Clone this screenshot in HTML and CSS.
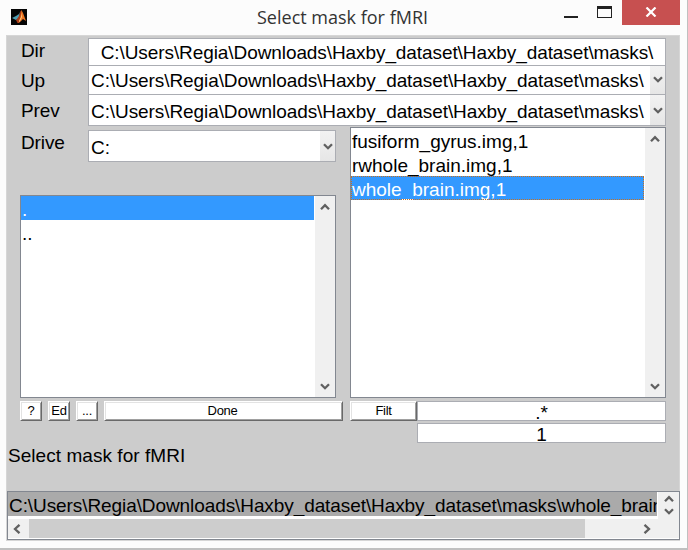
FILE: index.html
```
<!DOCTYPE html>
<html lang="en">
<head>
<meta charset="utf-8">
<title>Select mask for fMRI</title>
<link rel="stylesheet" href="styles.css">
</head>
<body>
<svg class="defs" aria-hidden="true">
  <symbol id="down" viewBox="0 0 10 8"><path d="M1 1.2L5 5.2L9 1.2" fill="none" stroke="#606060" stroke-width="2.3"/></symbol>
  <symbol id="up" viewBox="0 0 10 8"><path d="M1 6.2L5 2.2L9 6.2" fill="none" stroke="#606060" stroke-width="2.3"/></symbol>
</svg>
<div class="window">
  <header class="titlebar">
    <svg class="logo" viewBox="0 0 16 16">
      <rect width="16" height="16" fill="#050505"/>
      <path d="M1 9L5 7L8 5L9 3L8 9L5 11L3 10Z" fill="#4f9fb4"/>
      <path d="M6 10L8 7L9.5 2L11 1.5L10 8L8 14L6.5 14L5 11Z" fill="#a93b18"/>
      <path d="M10.500 1L12 4L15 12L12 10L9 13L7.500 14L9.500 8Z" fill="#ee7522"/>
      <path d="M8 12L10 8L11 4L11 8L8.500 13Z" fill="#ffd080"/>
    </svg>
    <h1 class="title">Select mask for fMRI</h1>
    <div class="controls">
      <span class="min"></span>
      <span class="max"></span>
      <span class="close"><svg viewBox="0 0 12 10" width="12" height="10"><path d="M1.500 .5L10.500 9.500M10.500 .5L1.500 9.500" stroke="#fff" stroke-width="2.200"/></svg></span>
    </div>
  </header>
  <main class="client">
    <div class="row row-dir"><label>Dir</label><div class="field center path">C:\Users\Regia\Downloads\Haxby_dataset\Haxby_dataset\masks\</div></div>
    <div class="row row-up"><label>Up</label><div class="field path">C:\Users\Regia\Downloads\Haxby_dataset\Haxby_dataset\masks\<span class="drop"><svg><use href="#down"/></svg></span></div></div>
    <div class="row row-prev"><label>Prev</label><div class="field path">C:\Users\Regia\Downloads\Haxby_dataset\Haxby_dataset\masks\<span class="drop"><svg><use href="#down"/></svg></span></div></div>
    <div class="browser">
      <div class="left">
        <div class="row row-drive"><label>Drive</label><div class="field">C:<span class="drop"><svg><use href="#down"/></svg></span></div></div>
        <div class="list dirs">
          <ul><li class="selected">.</li><li>..</li></ul>
          <div class="scroll"><svg><use href="#up"/></svg><svg><use href="#down"/></svg></div>
        </div>
      </div>
      <div class="list files">
        <ul><li>fusiform_gyrus.img,1</li><li>rwhole_brain.img,1</li><li class="selected focus">whole_brain.img,1</li></ul>
        <div class="scroll"><svg><use href="#up"/></svg><svg><use href="#down"/></svg></div>
      </div>
    </div>
    <div class="actions">
      <button class="help">?</button><button class="ed">Ed</button><button class="more">...</button><button class="done">Done</button><button class="filt">Filt</button>
      <div class="filters"><div class="edit star">.*</div><div class="edit">1</div></div>
    </div>
    <p class="prompt">Select mask for fMRI</p>
    <div class="chosen">
      <div class="chosen-top">
        <div class="chosen-item path">C:\Users\Regia\Downloads\Haxby_dataset\Haxby_dataset\masks\whole_brain</div>
        <div class="spin"><svg><use href="#up"/></svg><svg><use href="#down"/></svg></div>
      </div>
      <div class="hscroll">
        <svg class="prev" viewBox="0 0 8 10"><path d="M6.500 .8L2 5L6.500 9.200" fill="none" stroke="#606060" stroke-width="2.300"/></svg>
        <span class="thumb"></span>
        <svg class="next" viewBox="0 0 8 10"><path d="M1.500 .8L6 5L1.500 9.200" fill="none" stroke="#606060" stroke-width="2.300"/></svg>
      </div>
    </div>
  </main>
</div>
</body>
</html>
```
FILE: styles.css
```
* { box-sizing: border-box; }
body { margin: 0; font: 19px/24px "Liberation Sans", Arial, sans-serif; color: #000; }
.defs { display: none; }
.window {
  width: 688px; height: 550px; overflow: hidden;
  padding: 0 7px 0 6px;
  background: #fcfcfc;
  border-right: 1px solid #c0c0c0;
  border-bottom: 2px solid #c0c0c0;
}
.titlebar { display: flex; height: 35px; }
.logo { width: 16px; height: 16px; margin: 9px 0 0 5px; flex: none; }
.title {
  margin: 5px 0 0 230px; width: 180px; white-space: nowrap;
  font: 18px/25px "Open Sans", "Noto Sans", sans-serif; color: #333;
  letter-spacing: 0;
}
.controls { display: flex; margin-left: auto; }
.min { width: 14px; height: 2px; margin: 16px 19px 0 0; background: #222; }
.max { width: 15px; height: 12px; margin: 6px 10px 0 0; border: 1px solid #222; border-top-width: 3px; }
.close { width: 58px; height: 25px; background: #c75050; display: flex; justify-content: center; padding-top: 7px; margin-right: 0; }
.client {
  height: 506px; width: 674px; padding: 3px 0 0;
  background: #ccc; box-shadow: inset 0 0 0 1px #d6d6d6;
}
.row { display: flex; padding-left: 15px; }
.row label { width: 67px; flex: none; letter-spacing: -0.1px; }
.field {
  position: relative; width: 578px; flex: none; padding-left: 2px;
  background: #fff; border: 1px solid #abadb3; white-space: nowrap;
}
.center { text-align: center; padding: 0; }
.path { letter-spacing: -0.085px; }
.row-dir { height: 27px; }
.row-dir label { padding-top: 1px; }
.row-dir .field { height: 28px; line-height: 28px; }
.row-up { height: 29px; }
.row-up label { padding-top: 4px; }
.row-up .field { height: 30px; line-height: 29px; }
.row-prev { height: 32px; }
.row-prev label { padding-top: 5px; }
.row-prev .field { height: 32px; line-height: 33px; }
.drop {
  position: absolute; right: 0; top: 0; bottom: 0; width: 15px;
  background: linear-gradient(#f2f2f2, #e6e6e6);
  display: flex; align-items: center; justify-content: center;
}
svg { display: block; }
.drop svg, .scroll svg, .spin svg { width: 10px; height: 8px; }
.row-prev .drop, .row-drive .drop { padding-top: 2px; }
.browser { display: flex; justify-content: space-between; height: 272px; width: 660px; padding-top: 1px; }
.left { width: 330px; padding-top: 3px; }
.row-drive label { padding-top: 1px; }
.row-drive .field { width: 248px; height: 32px; line-height: 34px; }
.list { display: flex; width: 316px; background: #fff; border: 1px solid #828790; }
.dirs { height: 203px; margin: 33px 0 0 14px; }
.files { height: 271px; }
ul { list-style: none; margin: 0; padding: 0; flex: 1; }
li { height: 24px; line-height: 27px; padding-left: 1px; white-space: nowrap; }
.selected { background: #39f; color: #fff; }
.focus { outline: 1px dotted #c67020; outline-offset: -1px; }
.scroll {
  width: 20px; margin-left: 1px; background: #f0f0f0; flex: none;
  display: flex; flex-direction: column; justify-content: space-between; align-items: center; padding: 7px 0 6px;
}
.actions { display: flex; height: 45px; margin-top: 3px; padding-left: 14px; }
button {
  height: 20px; padding: 0; background: #fff; color: #000;
  font: 13px/16px "Liberation Sans", Arial, sans-serif; letter-spacing: -0.3px;
  border: 1px solid; border-color: #fff #696969 #696969 #fff;
  box-shadow: inset 1px 1px #e3e3e3, inset -1px -1px #a0a0a0;
}
.help, .more { width: 22px; margin-right: 6px; }
.ed { width: 22px; margin-right: 6px; }
.done { width: 239px; margin-right: 7px; padding-right: 2px; }
.filt { width: 67px; }
.edit {
  width: 249px; height: 20px; line-height: 22px; text-align: center;
  background: #fff; border: 1px solid #abadb3; margin-bottom: 2px;
}
.prompt { margin: 0; padding-left: 2px; height: 45px; line-height: 20px; letter-spacing: 0.05px; }
.chosen { width: 673px; height: 49px; margin-left: 1px; background: #fff; border: 1px solid #828790; }
.chosen-top { display: flex; height: 27px; }
.chosen-item { width: 649px; height: 24px; line-height: 27px; padding-left: 1px; overflow: hidden; background: #aaa; white-space: nowrap; }
.spin { width: 21px; margin-left: 1px; background: #f0f0f0; display: flex; flex-direction: column; align-items: center; padding-top: 3px; gap: 5px; }
.hscroll { display: flex; align-items: center; height: 19px; background: #f0f0f0; }
.hscroll svg { width: 8px; height: 10px; }
.prev { margin: 0 8px 0 5px; }
.thumb { width: 556px; height: 19px; background: #cdcdcd; }
.next { margin-left: 58px; }
```
